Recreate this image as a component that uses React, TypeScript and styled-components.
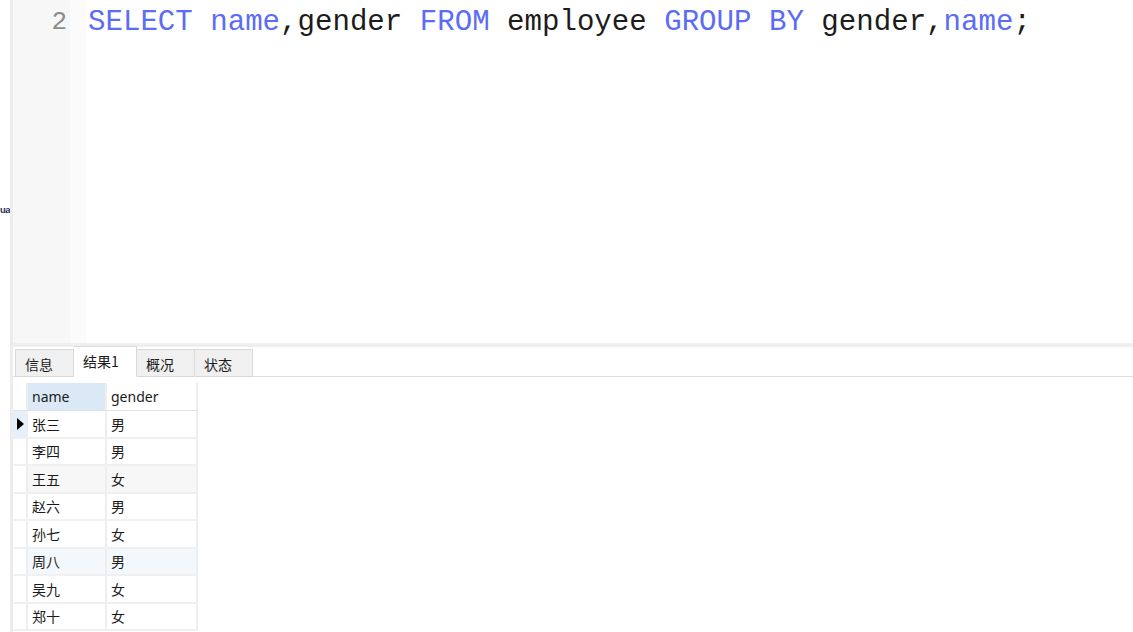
import React from 'react';
import styled, { createGlobalStyle } from 'styled-components';

const GlobalStyle = createGlobalStyle`
	html, body {
		margin: 0;
		padding: 0;
		background: #ffffff;
	}
	body {
		font-family: 'Noto Sans CJK SC', 'Noto Sans', sans-serif;
	}
`;

type Token = { text: string; keyword?: boolean };

const code: Token[] = [
	{ text: 'SELECT', keyword: true },
	{ text: ' ' },
	{ text: 'name', keyword: true },
	{ text: ',gender ' },
	{ text: 'FROM', keyword: true },
	{ text: ' employee ' },
	{ text: 'GROUP BY', keyword: true },
	{ text: ' gender,' },
	{ text: 'name', keyword: true },
	{ text: ';' },
];

const tabs = [
	{ label: '信息', width: 59 },
	{ label: '结果1', width: 63 },
	{ label: '概况', width: 58 },
	{ label: '状态', width: 58 },
];

const rows = [
	{ name: '张三', gender: '男' },
	{ name: '李四', gender: '男' },
	{ name: '王五', gender: '女', tone: 'gray' },
	{ name: '赵六', gender: '男' },
	{ name: '孙七', gender: '女' },
	{ name: '周八', gender: '男', tone: 'blue' },
	{ name: '吴九', gender: '女' },
	{ name: '郑十', gender: '女' },
];

const App = () => {
	return (
		<Page>
			<GlobalStyle />
			<SideClip>
				<span>ua</span>
			</SideClip>
			<Divider />
			<Main>
				<Editor>
					<Gutter>
						<LineNo>2</LineNo>
					</Gutter>
					<FoldMargin />
					<CodeArea>
						<CodeLine>
							{code.map((t, i) => (
								<Tok key={i} $keyword={t.keyword}>
									{t.text}
								</Tok>
							))}
						</CodeLine>
					</CodeArea>
				</Editor>
				<Splitter />
				<TabBar>
					{tabs.map((t, i) => (
						<Tab key={t.label} $active={i === 1} $width={t.width}>
							{t.label}
						</Tab>
					))}
				</TabBar>
				<GridArea>
					<Grid>
						<HeaderRow>
							<RowHead />
							<HeadCell $width={79} $selected>
								name
							</HeadCell>
							<HeadCell $width={91}>gender</HeadCell>
						</HeaderRow>
						{rows.map((r, i) => (
							<Row key={r.name} $tone={r.tone}>
								<RowHead $current={i === 0}>{i === 0 && <Arrow />}</RowHead>
								<Cell $width={79}>{r.name}</Cell>
								<Cell $width={91}>{r.gender}</Cell>
							</Row>
						))}
					</Grid>
				</GridArea>
			</Main>
		</Page>
	);
};

export default App;

const Page = styled.div`
	display: flex;
	width: 1133px;
	height: 632px;
	overflow: hidden;
	background: #ffffff;
`;

const SideClip = styled.div`
	width: 10px;
	flex-shrink: 0;
	display: flex;
	justify-content: flex-end;
	padding-top: 203px;
	box-sizing: border-box;

	span {
		font-family: 'Liberation Sans', sans-serif;
		font-size: 9.5px;
		font-weight: bold;
		letter-spacing: -0.5px;
		color: #232a5c;
		line-height: 14px;
		white-space: nowrap;
	}
`;

const Divider = styled.div`
	width: 3px;
	flex-shrink: 0;
	background: #ececec;
`;

const Main = styled.div`
	flex: 1;
	display: flex;
	flex-direction: column;
	min-width: 0;
`;

const Editor = styled.div`
	height: 343px;
	display: flex;
	flex-shrink: 0;
`;

const Gutter = styled.div`
	width: 57px;
	background: #f7f7f7;
	display: flex;
	justify-content: flex-end;
`;

const LineNo = styled.div`
	font-family: 'Liberation Mono', monospace;
	font-size: 26px;
	line-height: 34px;
	color: #8c8c8c;
	padding-top: 5px;
	padding-right: 3px;
`;

const FoldMargin = styled.div`
	width: 16px;
	background: #fbfbfb;
`;

const CodeArea = styled.div`
	flex: 1;
	padding-left: 2px;
	overflow: hidden;
`;

const CodeLine = styled.div`
	font-family: 'Liberation Mono', 'Courier New', monospace;
	font-size: 29.1px;
	line-height: 34px;
	padding-top: 6px;
	white-space: pre;
	color: #1c1c1c;
`;

const Tok = styled.span<{ $keyword?: boolean }>`
	color: ${(p) => (p.$keyword ? '#5b6cf6' : '#1c1c1c')};
`;

const Splitter = styled.div`
	height: 4px;
	flex-shrink: 0;
	background: #efefef;
`;

const TabBar = styled.div`
	height: 30px;
	flex-shrink: 0;
	display: flex;
	align-items: flex-end;
	padding-left: 2px;
	border-bottom: 1px solid #dedede;
	box-sizing: border-box;
`;

const Tab = styled.div<{ $active?: boolean; $width: number }>`
	width: ${(p) => p.$width}px;
	height: ${(p) => (p.$active ? 31 : 28)}px;
	margin-bottom: -1px;
	padding: 0 9px;
	box-sizing: border-box;
	display: flex;
	align-items: ${(p) => (p.$active ? 'flex-start' : 'center')};
	padding-top: ${(p) => (p.$active ? 4 : 2)}px;
	font-size: 14px;
	color: #1a1a1a;
	background: ${(p) => (p.$active ? '#ffffff' : '#f0f0f0')};
	border: 1px solid #d9d9d9;
	border-bottom: 1px solid ${(p) => (p.$active ? '#ffffff' : '#d9d9d9')};
	& + & {
		border-left: none;
	}
`;

const GridArea = styled.div`
	padding-top: 6px;
	display: flex;
`;

const Grid = styled.div`
	display: flex;
	flex-direction: column;
`;

const HeaderRow = styled.div`
	display: flex;
	height: 28px;
	border-bottom: 1px solid #e2e2e2;
	box-sizing: border-box;
`;

const Row = styled.div<{ $tone?: string }>`
	display: flex;
	height: 27.5px;
	box-sizing: border-box;
	border-bottom: 2px solid #f0f0f0;
	background: ${(p) =>
		p.$tone === 'gray' ? '#f7f7f7' : p.$tone === 'blue' ? '#f3f8fd' : '#ffffff'};
`;

const RowHead = styled.div<{ $current?: boolean }>`
	width: 15px;
	flex-shrink: 0;
	box-sizing: border-box;
	border-right: 2px solid #eeeeee;
	background: ${(p) => (p.$current ? '#e6f0fa' : '#ffffff')};
	display: flex;
	align-items: center;
	padding-left: 4px;
`;

const Arrow = styled.div`
	width: 0;
	height: 0;
	border-top: 6px solid transparent;
	border-bottom: 6px solid transparent;
	border-left: 7px solid #000000;
`;

const HeadCell = styled.div<{ $width: number; $selected?: boolean }>`
	width: ${(p) => p.$width}px;
	box-sizing: border-box;
	padding-left: 4px;
	display: flex;
	align-items: center;
	font-family: 'Noto Sans', 'Noto Sans CJK SC', sans-serif;
	font-size: 14px;
	color: #1a1a1a;
	background: ${(p) => (p.$selected ? '#dbe9f6' : '#ffffff')};
	border-right: 2px solid #eeeeee;
`;

const Cell = styled.div<{ $width: number }>`
	width: ${(p) => p.$width}px;
	box-sizing: border-box;
	padding-left: 4px;
	display: flex;
	align-items: center;
	font-size: 14px;
	color: #1a1a1a;
	border-right: 2px solid #eeeeee;
`;
